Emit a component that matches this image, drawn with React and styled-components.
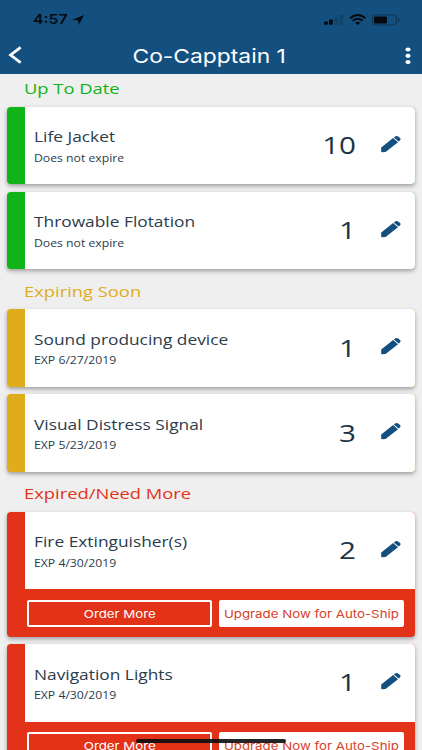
import React from 'react';
import styled, { createGlobalStyle } from 'styled-components';

const GlobalStyle = createGlobalStyle`
  *, *::before, *::after { box-sizing: border-box; }
  body { margin: 0; background: #efefef; }
  button { margin: 0; padding: 0; border: 0; background: none; }
`;

const colors = {
  navy: '#14507f',
  ink: '#2b3c4d',
  current: '#10b418',
  soon: '#e0ac1b',
  expired: '#e23319',
};

const Screen = styled.div`
  position: relative;
  width: 422px;
  height: 750px;
  overflow: hidden;
  background: #efefef;
  color: ${colors.ink};
  font-family: "Open Sans", "Noto Sans", sans-serif;
`;

/* Wide lettering: every label is set about 20% wider than its natural width. */
const Wide = styled.span`
  display: inline-block;
  white-space: nowrap;
  transform: scaleX(${(p) => p.$scale || 1.208});
  transform-origin: ${(p) => p.$origin || 'left'} center;
`;

const Header = styled.header`
  height: 74px;
  background: ${colors.navy};
  font-family: Inter, "Liberation Sans", sans-serif;
`;

const StatusBar = styled.div`
  display: flex;
  justify-content: space-between;
  height: 38px;
  padding: 11px 22px 0 33px;
  color: #050a10;
`;

const Clock = styled.div`
  display: flex;
  font-size: 13px;
  font-weight: 600;
  line-height: 17px;
`;

const LocationIcon = styled.svg`
  width: 12px;
  height: 10px;
  margin: 3.5px 0 0 10.5px;
`;

const StatusIcons = styled.svg`
  width: 76px;
  height: 12px;
  margin-top: 2.5px;
`;

const TitleBar = styled.div`
  display: grid;
  grid-template-columns: 40px 1fr 40px;
  height: 36px;
  color: #fff;
`;

const IconButton = styled.button`
  display: flex;
  color: inherit;
  justify-content: ${(p) => (p.$end ? 'flex-end' : 'flex-start')};
  padding: ${(p) => (p.$end ? '9px 11.5px 0 0' : '7.5px 0 0 8px')};
`;

const Title = styled.h1`
  margin: 0;
  padding: 6px 3px 0 0;
  font-size: 19.1px;
  font-weight: 400;
  line-height: 24px;
  text-align: center;
`;

const Section = styled.section`
  padding: 0 7px;
`;

const Heading = styled.h2`
  height: ${(p) => (p.$first ? '33px' : '40.2px')};
  margin: 0;
  padding: ${(p) => (p.$first ? '4px' : '11.4px')} 0 0 16.7px;
  color: ${(p) => p.$color};
  font-size: 15.2px;
  font-weight: 400;
  line-height: 20px;
`;

const CardList = styled.div`
  display: flex;
  flex-direction: column;
  gap: 7.5px;
`;

const Card = styled.article`
  width: 408px;
  overflow: hidden;
  border-radius: 4px;
  background: ${(p) => p.$color};
  box-shadow: 0 2px 4px rgba(0, 0, 0, 0.34);
`;

const Row = styled.div`
  display: flex;
  height: 77.4px;
  margin-left: 17.7px;
  padding: 0 14.3px 0 9px;
  background: #fff;
`;

const Details = styled.div`
  flex: 1;
  padding-top: 19.3px;
`;

const Name = styled.div`
  font-size: 14.35px;
  line-height: 21.4px;
`;

const Expiry = styled.div`
  font-size: 10.15px;
  line-height: 21px;
`;

const Quantity = styled.div`
  padding-top: 23.2px;
  margin-right: 24.3px;
  color: #1b3348;
  font-size: 24.5px;
  line-height: 30px;
`;

const EditButton = styled.button`
  display: flex;
  padding-top: 28.8px;
  color: ${colors.navy};
`;

const Actions = styled.div`
  display: grid;
  grid-template-columns: 1fr 1fr;
  gap: 7.6px;
  height: 47.4px;
  padding: 10.6px 11px 9.4px 20.3px;
`;

const ActionButton = styled.button`
  height: 27.4px;
  border: 2px solid #fff;
  border-radius: 2px;
  background: ${(p) => (p.$filled ? '#fff' : 'transparent')};
  color: ${(p) => (p.$filled ? '#d9412b' : '#fff')};
  display: flex;
  align-items: center;
  justify-content: center;
  font: 400 11px/14px Inter, "Liberation Sans", sans-serif;
`;

const HomeIndicator = styled.div`
  position: absolute;
  left: 136px;
  top: 739px;
  width: 150px;
  height: 4px;
  border-radius: 2px;
  background: rgba(10, 12, 14, 0.9);
`;

const Pencil = () => (
  <svg width="20" height="17" viewBox="0 0 20 17" fill="currentColor">
    <path d="M0.2 11.4 12.1 2.1 17 6.2 4.9 15.8Q4.6 16.1 4.2 16.1L.9 16.2Q.2 16.2.2 15.6Z" />
    <path d="M12.8 1.6 14.1.6Q15.8-.4 17.5.7L19 1.9Q20.2 3.1 18.9 4.6L17.7 5.6Z" />
  </svg>
);

const groups = [
  {
    title: 'Up To Date',
    color: colors.current,
    items: [
      { name: 'Life Jacket', expiry: 'Does not expire', quantity: 10 },
      { name: 'Throwable Flotation', expiry: 'Does not expire', quantity: 1 },
    ],
  },
  {
    title: 'Expiring Soon',
    color: colors.soon,
    items: [
      { name: 'Sound producing device', expiry: 'EXP 6/27/2019', quantity: 1 },
      { name: 'Visual Distress Signal', expiry: 'EXP 5/23/2019', quantity: 3 },
    ],
  },
  {
    title: 'Expired/Need More',
    color: colors.expired,
    orderable: true,
    items: [
      { name: 'Fire Extinguisher(s)', expiry: 'EXP 4/30/2019', quantity: 2 },
      { name: 'Navigation Lights', expiry: 'EXP 4/30/2019', quantity: 1 },
    ],
  },
];

const ItemCard = ({ item, color, orderable }) => (
  <Card $color={color}>
    <Row>
      <Details>
        <Name><Wide>{item.name}</Wide></Name>
        <Expiry><Wide>{item.expiry}</Wide></Expiry>
      </Details>
      <Quantity><Wide $origin="right">{item.quantity}</Wide></Quantity>
      <EditButton aria-label="Edit"><Pencil /></EditButton>
    </Row>
    {orderable && (
      <Actions>
        <ActionButton><Wide $origin="center">Order More</Wide></ActionButton>
        <ActionButton $filled><Wide $origin="center">Upgrade Now for Auto-Ship</Wide></ActionButton>
      </Actions>
    )}
  </Card>
);

export default function App() {
  return (
    <Screen>
      <GlobalStyle />
      <Header>
        <StatusBar>
          <Clock>
            <Wide $scale={1.22}>4:57</Wide>
            <LocationIcon viewBox="0 0 12 10" fill="currentColor">
              <path d="M12 0 6.7 10 6 5.3 0 4.9Z" />
            </LocationIcon>
          </Clock>
          <StatusIcons viewBox="0 0 76 12">
            <g fill="currentColor">
              <rect x="0" y="7.5" width="3.8" height="3.3" rx="0.8" />
              <rect x="5" y="5.5" width="3.8" height="5.3" rx="0.8" />
              <rect x="10.3" y="3.3" width="3.8" height="7.5" rx="0.8" opacity=".2" />
              <rect x="15.4" y="1" width="3.8" height="9.8" rx="0.8" opacity=".2" />
              <path d="M31 8.6 33.7 11 36.4 8.6Q33.7 6.7 31 8.6Z" />
              <rect x="50" y="2.4" width="13" height="7" rx="1.2" />
              <path d="M74 4v4q1.8-.7 1.8-2T74 4Z" opacity=".4" />
            </g>
            <g fill="none" stroke="currentColor">
              <path d="M26 4.2Q33.7-2 41.4 4.2M28.7 6.8Q33.7 2.8 38.7 6.8" strokeWidth="1.9" />
              <rect x="48.4" y="0.9" width="24" height="10" rx="2.8" opacity=".4" />
            </g>
          </StatusIcons>
        </StatusBar>
        <TitleBar>
          <IconButton aria-label="Back">
            <svg width="14" height="18" viewBox="0 0 14 18" fill="none" stroke="currentColor" strokeWidth="2.8">
              <path d="M12.6 1.3 2.6 9 12.6 16.7" />
            </svg>
          </IconButton>
          <Title><Wide $origin="center" $scale={1.195}>Co-Capptain 1</Wide></Title>
          <IconButton $end aria-label="More">
            <svg width="6" height="18" viewBox="0 0 6 18" fill="currentColor">
              <ellipse cx="3" cy="2.5" rx="2.6" ry="2.1" />
              <ellipse cx="3" cy="8.8" rx="2.6" ry="2.1" />
              <ellipse cx="3" cy="15.1" rx="2.6" ry="2.1" />
            </svg>
          </IconButton>
        </TitleBar>
      </Header>
      {groups.map((group, index) => (
        <Section key={group.title}>
          <Heading $first={index === 0} $color={group.color}><Wide>{group.title}</Wide></Heading>
          <CardList>
            {group.items.map((item) => (
              <ItemCard key={item.name} item={item} color={group.color} orderable={group.orderable} />
            ))}
          </CardList>
        </Section>
      ))}
      <HomeIndicator />
    </Screen>
  );
}
